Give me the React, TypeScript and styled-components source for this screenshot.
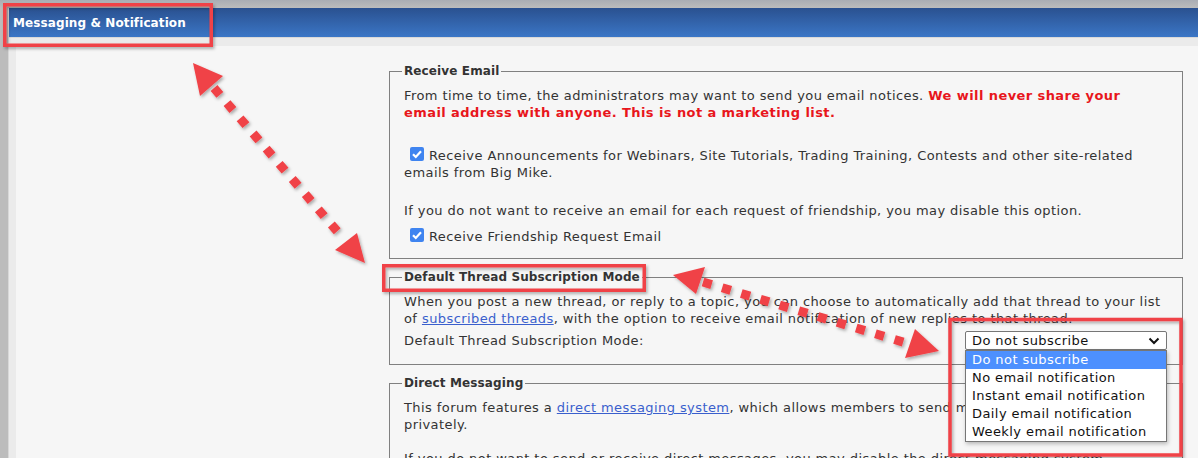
import React from "react";
import styled, { createGlobalStyle } from "styled-components";

const GlobalStyle = createGlobalStyle`
  html, body {
    margin: 0;
    padding: 0;
    background: #b9b9b9;
  }
  body {
    font-family: "DejaVu Sans", Verdana, sans-serif;
    font-size: 13px;
    color: #333;
  }
`;

const Page = styled.div`
  position: relative;
  width: 1198px;
  height: 458px;
  overflow: hidden;
  padding: 8px 0 0 8px;
  box-sizing: border-box;
  background: linear-gradient(#a9adb4, #bcbcbc 8px);
`;

const Panel = styled.div`
  background: #ebebeb;
  height: 100%;
  border-left: 1px solid #d8d8d8;
`;

const Header = styled.div`
  height: 29px;
  display: flex;
  align-items: center;
  padding-left: 4px;
  background: linear-gradient(#2a5190, #3b76c6);
  border-bottom: 1px solid #d9d9d9;
  color: #fff;
  font-weight: bold;
  font-size: 12px;
  letter-spacing: 0.1px;
`;

const Body = styled.div`
  padding: 8px 0 0 7px;
  height: 100%;
  box-sizing: border-box;
`;

const Content = styled.div`
  background: #f6f6f6;
  height: 100%;
  display: grid;
  grid-template-columns: 373px 794px;
  padding-top: 17px;
  box-sizing: border-box;
`;

const Column = styled.div`
  grid-column: 2;
  display: flex;
  flex-direction: column;
  gap: 10px;
`;

const Group = styled.fieldset<{ $bottom?: number }>`
  margin: 0;
  padding: 7px 15px ${(p) => p.$bottom ?? 12}px 14px;
  border: 1px solid #808080;
  line-height: 17px;
  letter-spacing: 0.42px;
`;

const Legend = styled.legend`
  padding: 0 2px;
  margin-left: -2px;
  font-weight: bold;
  font-size: 12px;
  letter-spacing: 0.12px;
  color: #333;
`;

const Para = styled.div<{ $gap?: number }>`
  margin-top: ${(p) => p.$gap ?? 0}px;
`;

const Warning = styled.strong`
  color: #e8161c;
`;

const Link = styled.a`
  color: #3a5fcd;
  text-decoration: underline;
`;

const Box = styled.span`
  display: inline-block;
  width: 14px;
  height: 14px;
  margin: 0 5px 0 6px;
  vertical-align: -1px;
  border-radius: 2px;
  background: #3f84f0;

  svg {
    display: block;
  }
`;

const SelectRow = styled.div`
  display: flex;
  justify-content: space-between;
  align-items: center;
  margin-top: 4px;
`;

const SelectWrap = styled.div`
  position: relative;
  width: 202px;
`;

const SelectBox = styled.div`
  height: 19px;
  box-sizing: border-box;
  border: 1px solid #767676;
  border-radius: 2px;
  background: #fff;
  display: flex;
  align-items: center;
  justify-content: space-between;
  padding: 0 6px 0 6px;
  color: #111;
`;

const OptionList = styled.ul`
  position: absolute;
  top: 19px;
  left: 0;
  right: 0;
  margin: 0;
  padding: 0;
  list-style: none;
  background: #fff;
  border: 1px solid #767676;
  box-shadow: 1px 2px 4px rgba(0, 0, 0, 0.25);
  z-index: 2;
`;

const OptionItem = styled.li<{ $active?: boolean }>`
  height: 18px;
  line-height: 18px;
  padding: 0 6px;
  color: ${(p) => (p.$active ? "#fff" : "#111")};
  background: ${(p) => (p.$active ? "#4d90fe" : "transparent")};
`;

const Marks = styled.svg`
  position: absolute;
  left: 0;
  top: 0;
  pointer-events: none;
  z-index: 5;
`;

function Check() {
  return (
    <Box>
      <svg width="14" height="14" viewBox="0 0 14 14">
        <path d="M3 7.2 L5.8 10 L11 4.2" fill="none" stroke="#fff" strokeWidth="2.2" />
      </svg>
    </Box>
  );
}

const options = [
  "Do not subscribe",
  "No email notification",
  "Instant email notification",
  "Daily email notification",
  "Weekly email notification",
];

function Callouts() {
  const red = "#f04247";
  return (
    <Marks width="1198" height="458" viewBox="0 0 1198 458">
      <defs>
        <filter id="drop" x="-20%" y="-20%" width="140%" height="140%">
          <feDropShadow dx="1.5" dy="2" stdDeviation="1.5" floodColor="#000" floodOpacity="0.3" />
        </filter>
      </defs>
      <g filter="url(#drop)" fill="none" stroke={red} strokeWidth="3.5">
        <rect x="4.75" y="4.75" width="206.5" height="40.5" />
        <rect x="383.75" y="265.75" width="260.5" height="24.5" />
        <rect x="950" y="319.5" width="231" height="135.5" />
      </g>
      <g filter="url(#drop)">
        <line x1="214" y1="88" x2="343" y2="238" stroke={red} strokeWidth="9" strokeDasharray="9 11" />
        <polygon points="193,63 223,76 200,96" fill={red} />
        <polygon points="365,263 357,233 335,250" fill={red} />
        <line x1="703" y1="282" x2="906" y2="343" stroke={red} strokeWidth="9" strokeDasharray="9 11" />
        <polygon points="673,275 705,267 696,294" fill={red} />
        <polygon points="939,351 915,329 905,358" fill={red} />
      </g>
    </Marks>
  );
}

export default function App() {
  return (
    <>
      <GlobalStyle />
      <Page>
        <Panel>
          <Header>Messaging &amp; Notification</Header>
          <Body>
            <Content>
              <Column>
                <Group $bottom={13}>
                  <Legend>Receive Email</Legend>
                  <Para>
                    From time to time, the administrators may want to send you email notices.{" "}
                    <Warning>We will never share your email address with anyone. This is not a marketing list.</Warning>
                  </Para>
                  <Para $gap={26}>
                    <Check />
                    Receive Announcements for Webinars, Site Tutorials, Trading Training, Contests and other
                    site-related emails from Big Mike.
                  </Para>
                  <Para $gap={21}>
                    If you do not want to receive an email for each request of friendship, you may disable this
                    option.
                  </Para>
                  <Para $gap={9}>
                    <Check />
                    Receive Friendship Request Email
                  </Para>
                </Group>
                <Group $bottom={14}>
                  <Legend>Default Thread Subscription Mode</Legend>
                  <Para>
                    When you post a new thread, or reply to a topic, you can choose to automatically add that
                    thread to your list of <Link href="#">subscribed threads</Link>, with the option to receive
                    email notification of new replies to that thread.
                  </Para>
                  <SelectRow>
                    <span>Default Thread Subscription Mode:</span>
                    <SelectWrap>
                      <SelectBox>
                        <span>Do not subscribe</span>
                        <svg width="12" height="8" viewBox="0 0 12 8">
                          <path d="M1.5 1.5 L6 6 L10.5 1.5" fill="none" stroke="#111" strokeWidth="2" />
                        </svg>
                      </SelectBox>
                      <OptionList>
                        {options.map((o, i) => (
                          <OptionItem key={o} $active={i === 0}>
                            {o}
                          </OptionItem>
                        ))}
                      </OptionList>
                    </SelectWrap>
                  </SelectRow>
                </Group>
                <Group>
                  <Legend>Direct Messaging</Legend>
                  <Para>
                    This forum features a <Link href="#">direct messaging system</Link>, which allows members to
                    send messages to each other privately.
                  </Para>
                  <Para $gap={17}>
                    If you do not want to send or receive direct messages, you may disable the direct messaging
                    system.
                  </Para>
                </Group>
              </Column>
            </Content>
          </Body>
        </Panel>
        <Callouts />
      </Page>
    </>
  );
}
